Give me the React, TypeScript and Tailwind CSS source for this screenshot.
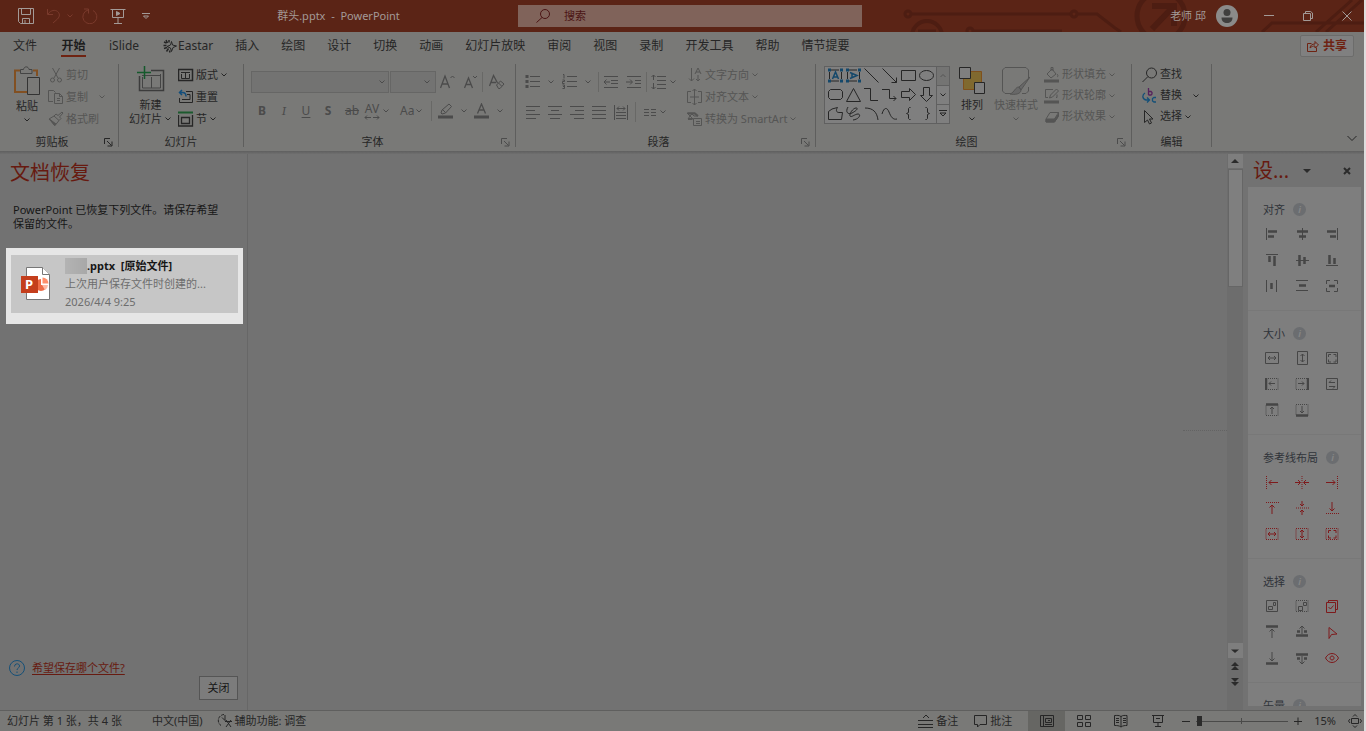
import type { ReactNode } from 'react';

interface IcoProps {
  children: ReactNode;
  size?: number;
  w?: number;
  className?: string;
  sw?: number;
}

// Line icon on a pixel grid, viewBox follows the drawn size
function Ico({ children, size = 16, w, className = '', sw = 1 }: IcoProps) {
  const width = w ?? size;
  return (
    <svg
      width={width}
      height={size}
      viewBox={`0 0 ${width} ${size}`}
      fill="none"
      stroke="currentColor"
      strokeWidth={sw}
      className={`shrink-0 ${className}`}
      aria-hidden="true"
    >
      {children}
    </svg>
  );
}

function Chevron({ className = '' }: { className?: string }) {
  return (
    <Ico size={8} className={className}>
      <path d="M1.5 2.5 4 5l2.5-2.5" />
    </Ico>
  );
}

function Sep() {
  return <span className="h-5 w-px shrink-0 bg-[#686866]" />;
}

// ---------- Title bar ----------

function TitleBar() {
  return (
    <header className="relative flex h-8 shrink-0 items-center bg-[#5b2416] text-[11px] text-[#a39a97]">
      <svg
        className="absolute top-0 right-0 h-8 w-[464px]"
        viewBox="0 0 464 32"
        fill="none"
        stroke="#4d1d12"
        strokeWidth="3"
        aria-hidden="true"
      >
        <circle cx="8" cy="14" r="3" />
        <path d="M12 14h158" />
        <circle cx="174" cy="14" r="3" />
        <path d="M178 14h19l18 14 6 4" />
        <circle cx="27" cy="36" r="15" strokeWidth="4" />
        <path d="M18 31h18" />
        <circle cx="70" cy="31" r="3" />
        <path d="M74 31h88" />
        <circle cx="261" cy="16" r="24" strokeWidth="5" />
        <path d="M252 6h22v20M252 29l21-22" strokeWidth="6" />
        <path d="M362 32l10-9h92M416 32 452 0M426 32 462 0" />
      </svg>
      <div className="relative flex w-[246px] shrink-0 items-center pl-[18px]">
        <button aria-label="保存">
          <Ico>
            <path d="M.5.5h15v15h-13l-2-2zM3.5.5v6h9v-6M4.5 15.5v-5h7v5M7 12v3" />
          </Ico>
        </button>
        <button aria-label="撤消" className="ml-3 flex items-center text-[#7a3a2c]">
          <Ico>
            <path d="M1.5 1v5.5h5.5M2 6c3-4 7-4.500 9.500-2.500s2.500 5 0 7.500L7 15" />
          </Ico>
          <Chevron className="ml-1" />
        </button>
        <button aria-label="重复" className="ml-2 text-[#7a3a2c]">
          <Ico>
            <path d="M2 1h4.500v4.500M6 2a7 7 0 1 0 5 .5" />
          </Ico>
        </button>
        <button aria-label="从头开始" className="ml-3">
          <Ico>
            <path d="M.5 1.500h15M2.500 2v7.500h11V2M8 10v5M4 15.500h8" />
            <path d="M6.500 3.500v4l3.500-2z" fill="currentColor" />
          </Ico>
        </button>
        <button aria-label="自定义快速访问工具栏" className="ml-4">
          <Ico size={8}>
            <path d="M0 1.500h8M1.500 4h5L4 6.500z" />
          </Ico>
        </button>
      </div>
      <h1 className="relative w-[185px] shrink-0 text-center whitespace-pre">群头.pptx  -  PowerPoint</h1>
      <label className="relative ml-[87px] flex h-[22px] w-[344px] shrink-0 items-center bg-[#80635a] pl-[18px] text-[#4b1414]">
        <Ico size={14}>
          <circle cx="9" cy="5" r="4.500" />
          <path d="M6 8.500.5 13.500" />
        </Ico>
        <input
          type="text"
          aria-label="搜索"
          placeholder="搜索"
          className="w-40 bg-transparent pl-3.5 outline-none placeholder:text-[#4b1414]"
        />
      </label>
      <div className="relative ml-auto flex items-center pr-3">
        <button className="flex items-center gap-2.5">
          <span>老师 邱</span>
          <svg width="22" height="22" viewBox="0 0 22 22" aria-hidden="true">
            <circle cx="11" cy="11" r="11" fill="#8b8b8a" />
            <circle cx="11" cy="7.500" r="3.500" fill="#403f3e" />
            <path d="M5.500 12.500h11c0 4-2.500 5.500-5.500 5.500s-5.500-1.500-5.500-5.500z" fill="#403f3e" />
          </svg>
        </button>
        <button aria-label="最小化" className="ml-[26px]">
          <Ico size={10}>
            <path d="M0 4.500h10" />
          </Ico>
        </button>
        <button aria-label="还原" className="ml-[29px]">
          <Ico size={10}>
            <path d="M.5 2.500h7v7h-7zM2.500 2V.5h5l2 1.500v5.500H8" />
          </Ico>
        </button>
        <button aria-label="关闭窗口" className="ml-[29px]">
          <Ico size={10}>
            <path d="m.5.5 9 9m0-9-9 9" />
          </Ico>
        </button>
      </div>
    </header>
  );
}

// ---------- Tabs ----------

const TABS = ['插入', '绘图', '设计', '切换', '动画', '幻灯片放映', '审阅', '视图', '录制', '开发工具', '帮助', '情节提要'];

function TabStrip() {
  return (
    <nav className="flex h-7 shrink-0 items-center text-xs whitespace-nowrap text-[#262626]">
      <button className="h-7 pr-3 pl-[13px]">文件</button>
      <button className="flex h-7 flex-col items-center px-3 font-bold text-[#1d1d1d]">
        <span className="leading-7">开始</span>
        <span className="-mt-[5px] h-0.5 w-[25px] shrink-0 bg-[#6f2312]" />
      </button>
      <button className="h-7 pr-3 pl-[11px]">iSlide</button>
      <button className="flex h-7 items-center gap-px pr-[11px] pl-3">
        <Ico size={14}>
          <path d="M8.5 2.500 9.500 6l4 1-3.500 1.500L8.500 12.500 7.500 9 4 7.500 7.500 6z" />
          <path d="M1 3l2.500 1M3 1l1.500 3M6 1v2.500M.5 6.500h3M1 9.500l3-1M3.500 12.500l2-3M7 13.500l-.5-2" strokeWidth="1.500" />
        </Ico>
        <span>Eastar</span>
      </button>
      {TABS.map((tab) => (
        <button key={tab} className="h-7 px-[11px]">
          {tab}
        </button>
      ))}
      <button className="mr-2.5 ml-auto flex h-[22px] items-center gap-1 rounded-xs border border-[#6c6c6b] bg-[#808080] px-1.5 font-bold text-[#6f2312]">
        <Ico size={12}>
          <path d="M4.500 3.500h-4v8h9v-4M3 8c.5-3 2-4 5-4V1.500L11.500 5 8 8V6c-2 0-3.500.5-5 2z" />
        </Ico>
        共享
      </button>
    </nav>
  );
}

// ---------- Ribbon ----------

interface GroupProps {
  label: string;
  children: ReactNode;
  className: string;
  launcher?: string;
}

function Group({ label, children, className, launcher }: GroupProps) {
  return (
    <section className={`my-1 flex shrink-0 flex-col border-r border-[#5e5e5d] ${className}`} aria-label={label}>
      <div className="flex h-[66px] shrink-0">{children}</div>
      <div className="flex flex-1 items-end">
        <span className="flex-1 text-center leading-none">{label}</span>
        {launcher && (
          <button className={`w-3.5 ${launcher}`} aria-label={`${label}设置`}>
            <Ico size={9}>
              <path d="M.5 6V.5H6M3 3l4.500 4.500M8 3.500V8H3.500" />
            </Ico>
          </button>
        )}
      </div>
    </section>
  );
}

interface RowProps {
  icon: ReactNode;
  label: string;
  arrow?: boolean;
  gap?: string;
  dim?: boolean;
  height?: string;
}

function Row({ icon, label, arrow, gap = 'ml-0.5', dim, height = 'h-[22px]' }: RowProps) {
  return (
    <button className={`flex shrink-0 items-center whitespace-nowrap ${height} ${dim ? 'text-[#555554]' : ''}`}>
      {icon}
      <span className="ml-0.5">{label}</span>
      {arrow && <Chevron className={gap} />}
    </button>
  );
}

function ClipboardGroup() {
  return (
    <Group label="剪贴板" className="w-[119px]" launcher="text-[#262626]">
      <button className="flex w-[46px] flex-col items-center justify-start pt-0.5 pl-2">
        <Ico size={30} w={28}>
          <path d="M7 4.500H2v21.500h12M20 4.500h4V10" stroke="#825022" strokeWidth="2" />
          <path d="M7.500 7.500v-4h3C11 0 15.500 0 16 3.500h3v4z" stroke="#444" />
          <path d="M14.500 11.500h12v17h-12z" stroke="#333" />
        </Ico>
        <span className="mt-1 leading-3">粘贴</span>
        <Chevron className="mt-1" />
      </button>
      <div className="ml-0.5 flex flex-col">
        <Row
          dim
          label="剪切"
          icon={
            <Ico>
              <path d="M4.500 1 10 11M11.500 1 6 11" />
              <circle cx="4.500" cy="13" r="2" />
              <circle cx="11.500" cy="13" r="2" />
            </Ico>
          }
        />
        <Row
          dim
          arrow
          gap="ml-2.5"
          label="复制"
          icon={
            <Ico>
              <path d="M5 12.500H.5v-11h5l2 2M6.500 4.500h5l3 3v7h-8zM11.500 4.500v3h3M9 9.500h3M9 11.500h3" />
            </Ico>
          }
        />
        <Row
          dim
          label="格式刷"
          icon={
            <Ico>
              <path d="m14 1 1 1-3.500 4 1.500 1.500-2 2L6 5l2-2 2 1.500zM6 5 1 8l6 6.500L11 9.500" />
              <path d="m2 8.500 6 4.500-1.500 1.500z" fill="currentColor" />
            </Ico>
          }
        />
      </div>
    </Group>
  );
}

function SlidesGroup() {
  return (
    <Group label="幻灯片" className="w-[125px]">
      <button className="flex w-[51px] flex-col items-center justify-start pt-0.5 pl-3">
        <Ico size={26} w={28}>
          <path d="M2.500 10v14.500h24v-20H14" stroke="#3c3c3c" strokeWidth="1.500" />
          <path d="M5 9.500h19M14.500 11v11M5.500 11v11h18V8" stroke="#444" />
          <path d="M7.500 0v13M0 6.500h14" stroke="#155a2c" strokeWidth="1.500" />
        </Ico>
        <span className="mt-1.5 leading-[14px]">新建</span>
        <span className="flex items-center leading-[14px] whitespace-nowrap">
          幻灯片
          <Chevron className="ml-0.5" />
        </span>
      </button>
      <div className="ml-2 flex flex-col">
        <Row
          arrow
          label="版式"
          icon={
            <Ico>
              <path d="M.5 2.500h14v11H.5z" strokeWidth="1.500" />
              <path d="M3 5.500h9M3.500 7v4.500h8V7M7.500 6v5" />
            </Ico>
          }
        />
        <Row
          label="重置"
          icon={
            <Ico>
              <path d="M8 2.500h6.500v11H1.500V9M9 5.500h3v5H4" />
              <path d="M4 1 1.500 3.500 4 6M2 3.500h2.500c2.500 0 3.500 1.500 3.500 4" stroke="#124e7c" strokeWidth="1.500" />
            </Ico>
          }
        />
        <Row
          arrow
          label="节"
          icon={
            <Ico>
              <path d="M0 1.500h15" stroke="#1c5a2e" strokeWidth="2" />
              <path d="M.5 4v11h14V4M3.500 6.500h8v6h-8z" strokeWidth="1.300" />
            </Ico>
          }
        />
      </div>
    </Group>
  );
}

function FontGroup() {
  return (
    <Group label="字体" className="w-[272px]" launcher="text-[#4c4c4c]">
      <div className="flex w-full flex-col pt-[7px] pl-[7px] text-[#4b4b4b]">
        <div className="flex items-center">
          <span className="flex h-[22px] w-[138px] items-center border border-[#666665] bg-[#737372] pr-0.5">
            <select aria-label="字体" disabled className="h-5 flex-1 appearance-none">
              <option />
            </select>
            <Chevron />
          </span>
          <span className="ml-px flex h-[22px] w-[46px] items-center border border-[#666665] bg-[#737372] pr-0.5">
            <select aria-label="字号" disabled className="h-5 w-8 appearance-none">
              <option />
            </select>
            <Chevron />
          </span>
          <button aria-label="增大字号" className="ml-1">
            <Ico>
              <path d="m.5 14 4.500-12 4.500 12M2 10h6" strokeWidth="1.300" />
              <path d="m10.500 4 2-2 2 2" />
            </Ico>
          </button>
          <button aria-label="减小字号" className="ml-2">
            <Ico>
              <path d="m.5 14 4-10 4 10M2 10.500h5" strokeWidth="1.300" />
              <path d="m9 2 2 2 2-2" />
            </Ico>
          </button>
          <span className="ml-0.5 flex items-center">
            <Sep />
          </span>
          <button aria-label="清除格式" className="ml-1.5">
            <Ico>
              <path d="m.5 12 4-10.500L8.500 9M2 8.500h5" strokeWidth="1.300" />
              <path d="m7.500 11 4-4 3.500 3-4 4.500H9.500zM9.500 9l3 3" />
            </Ico>
          </button>
        </div>
        <div className="mt-1.5 flex h-6 items-center text-xs">
          <button className="w-[22px] font-bold">B</button>
          <button className="w-[22px] font-serif text-[13px] italic">I</button>
          <button className="w-[22px] underline underline-offset-2">U</button>
          <button className="w-[22px] font-bold">S</button>
          <button className="ml-0.5 w-[22px] line-through">ab</button>
          <button className="flex items-center" aria-label="字符间距">
            <span className="flex w-[18px] flex-col items-center leading-3">
              AV
              <Ico size={5} w={16}>
                <path d="M3 .5 1 2.500l2 2M1 2.500h6M9 2.500h6M13 .5l2 2-2 2" />
              </Ico>
            </span>
            <Chevron className="ml-px" />
          </button>
          <button className="ml-2.5 flex items-center">
            Aa
            <Chevron className="ml-px" />
          </button>
          <span className="ml-2 flex">
            <Sep />
          </span>
          <button aria-label="突出显示" className="ml-1.5 flex items-center gap-1">
            <Ico>
              <path d="M0 14h15" strokeWidth="3" />
              <path d="m3 10 1-3 7-6 2.500 2.500-6 6.500-3.500 1zM4.500 6.500l3 3" />
            </Ico>
            <Chevron className="ml-0.5" />
          </button>
          <button aria-label="字体颜色" className="ml-1.5 flex items-center gap-1">
            <Ico>
              <path d="M0 14h15" strokeWidth="3" />
              <path d="m3.500 10.500 4-9.500 4 9.500M5 7h5" strokeWidth="1.300" />
            </Ico>
            <Chevron className="ml-0.5" />
          </button>
        </div>
      </div>
    </Group>
  );
}

const ALIGN = [
  { name: '左对齐', d: 'M1 2.500h14M1 6.500h9M1 10.500h14M1 14.500h10' },
  { name: '居中', d: 'M1 2.500h14M4 6.500h8M1 10.500h14M3 14.500h10' },
  { name: '右对齐', d: 'M1 2.500h14M6 6.500h9M1 10.500h14M5 14.500h10' },
  { name: '两端对齐', d: 'M1 2.500h14M1 6.500h14M1 10.500h14M1 14.500h14' },
  { name: '分散对齐', d: 'M1.500 1v15M14.500 1v15M4 4.500h8M6 2.500l-2 2 2 2M10 2.500l2 2-2 2M3 8.500h10M3 11.500h10M3 14.500h10' },
];

function ParagraphGroup() {
  return (
    <Group label="段落" className="w-[300px]" launcher="text-[#4c4c4c]">
      <div className="flex w-[171px] shrink-0 flex-col pt-1.5 pl-[9px] text-[#4b4b4b]">
        <div className="flex h-6 items-center">
          <button aria-label="项目符号" className="flex items-center gap-1.5">
            <Ico>
              <path d="M5 2.500h10M5 7.500h10M5 12.500h10" />
              <path d="M.5 2.500h3M.5 7.500h3M.5 12.500h3" strokeWidth="3" />
            </Ico>
            <Chevron />
          </button>
          <button aria-label="编号" className="ml-[7px] flex items-center gap-1.5">
            <Ico>
              <path d="M5 2.500h10M5 7.500h10M5 12.500h10M1 .5h1v4M.5 6h2v1.500h-2v2h2M.5 11h2v3.500h-2M1 12.500h1" />
            </Ico>
            <Chevron />
          </button>
          <span className="ml-1.5 flex">
            <Sep />
          </span>
          <button aria-label="减少缩进" className="ml-1">
            <Ico>
              <path d="M1 2.500h14M8 6.500h7M8 9.500h7M1 13.500h14M7 8H1M3.500 5.500 1 8l2.500 2.500" />
            </Ico>
          </button>
          <button aria-label="增加缩进" className="ml-[7px]">
            <Ico>
              <path d="M1 2.500h14M9 6.500h6M9 9.500h6M1 13.500h14M0 8h6M4 5.500 6.500 8 4 10.500" />
            </Ico>
          </button>
          <span className="ml-1 flex">
            <Sep />
          </span>
          <button aria-label="行距" className="ml-1 flex items-center gap-0.5">
            <Ico>
              <path d="M6 2.500h9M6 6.500h9M6 10.500h9M6 14.500h9M2.500 1v5M.5 3l2-2 2 2M2.500 9v6M.5 13l2 2 2-2" />
            </Ico>
            <Chevron />
          </button>
        </div>
        <div className="mt-1.5 flex h-6 items-center gap-1.5">
          {ALIGN.map((a) => (
            <button key={a.name} aria-label={a.name}>
              <Ico>
                <path d={a.d} />
              </Ico>
            </button>
          ))}
          <Sep />
          <button aria-label="分栏" className="ml-0.5 flex items-center">
            <Ico size={14}>
              <path d="M0 4.500h5M7 4.500h5M0 7.500h5M7 7.500h5M0 10.500h5M7 10.500h5" />
            </Ico>
            <Chevron className="ml-px" />
          </button>
        </div>
      </div>
      <div className="flex flex-col">
        <Row
          dim
          arrow
          label="文字方向"
          icon={
            <Ico>
              <path d="M4.500 1v13M2 11.500 4.500 14 7 11.500M8 7l3-6 3 6M9 5h4M11 8v6M9 12l2 2 2-2" />
            </Ico>
          }
        />
        <Row
          dim
          arrow
          label="对齐文本"
          icon={
            <Ico>
              <path d="M4 2.500H.5v11H4M11 2.500h3.500v11H11M7.500 0v16M5.500 2l2-2 2 2M5.500 14l2 2 2-2M3 8h9" />
            </Ico>
          }
        />
        <Row
          dim
          arrow
          label="转换为 SmartArt"
          icon={
            <Ico>
              <path d="M0 2h8l3 3H7L5 3 3 5l3 3H1l2-3zM6.500 7.500h8v7h-8zM9 10.500h4M9 12.500h4" />
              <path d="M1 2.500h7l3 2.500M1 8h4" strokeWidth="2" />
            </Ico>
          }
        />
      </div>
    </Group>
  );
}

const textBox = 'M4 3h8M4 14h8M2.500 5v7M14.500 5v7';
const corners = 'M1 1.500h3v3H1zM13 1.500h3v3h-3zM1 12.500h3v3H1zM13 12.500h3v3h-3z';

const SHAPES: { name: string; d: string; blue?: string }[] = [
  { name: '文本框', d: textBox, blue: 'M5.500 12l3-7 3 7M6.500 10h4' },
  { name: '竖排文本框', d: textBox, blue: 'M5 5.500l7 3-7 3M7 6.500v4' },
  { name: '直线', d: 'M1.500 1.500l14 14' },
  { name: '箭头', d: 'M1.500 1.500l14 14M15.500 10.500v5h-5' },
  { name: '矩形', d: 'M1.500 3.500h14v10h-14z' },
  { name: '椭圆', d: 'M1.500 8.500a7 5 0 1 0 14 0 7 5 0 1 0-14 0' },
  { name: '圆角矩形', d: 'M3.500 3.500h10l2 2v6l-2 2h-10l-2-2v-6z' },
  { name: '三角形', d: 'M8.500 2.500l7 13h-14z' },
  { name: '肘形连接符', d: 'M1 2.500h6.500v12H15' },
  { name: '肘形箭头', d: 'M1 3.500h7.500v9H15M12.500 10l2.500 2.500-2.500 2.500' },
  { name: '右箭头', d: 'M1.500 5.500h8v-3l6 6-6 6v-3h-8z' },
  { name: '下箭头', d: 'M5.500 1.500v8h-3l6 6 6-6h-3v-8z' },
  { name: '任意多边形', d: 'M5 4l5.500-1.500c-2 3-1 5 1.500 5h3.500l-1 7h-13v-8z' },
  { name: '自由曲线', d: 'M3 2c-3 5 0 8 4 6s7-5 4-5-7 6-6 8 5-2 8-2 2 5-5 6' },
  { name: '弧形', d: 'M2 3c8 0 12 4 13 12' },
  { name: '曲线', d: 'M1 9c2-7 5-7 7-2s4 8 8 7' },
  { name: '左大括号', d: 'M10.500 2.500h-1l-1 1v4l-2 1 2 1v4l1 1h1' },
  { name: '右大括号', d: 'M7.500 2.500h1l1 1v4l2 1-2 1v4l-1 1h-1' },
];

function DrawingGroup() {
  return (
    <Group label="绘图" className="w-[316px]" launcher="text-[#4c4c4c]">
      <div className="mt-0.5 ml-2 flex h-[58px] w-[126px] shrink-0 border border-[#606060] bg-[#7f7f7f]">
        <div className="grid w-[111px] shrink-0 grid-cols-6 pl-0.5">
          {SHAPES.map((s) => (
            <button key={s.name} aria-label={s.name}>
              <Ico size={18}>
                <path d={s.d} stroke="#262626" />
                {s.blue && (
                  <>
                    <path d={corners} fill="#14486b" stroke="none" />
                    <path d={s.blue} stroke="#14486b" strokeWidth="1.500" />
                  </>
                )}
              </Ico>
            </button>
          ))}
        </div>
        <div className="flex flex-1 flex-col border-l border-[#606060]">
          <button aria-label="向上滚动" className="flex flex-1 items-center justify-center bg-[#747473] text-[#555]">
            <Ico size={8}>
              <path d="M1.500 5 4 2.500 6.500 5" />
            </Ico>
          </button>
          <button aria-label="向下滚动" className="flex flex-1 items-center justify-center border-y border-[#606060]">
            <Chevron />
          </button>
          <button aria-label="其他形状" className="flex flex-1 items-center justify-center">
            <Ico size={8}>
              <path d="M0 .5h8M1 3l3 3 3-3z" />
            </Ico>
          </button>
        </div>
      </div>
      <button className="flex w-11 shrink-0 flex-col items-center justify-start pt-[3px]">
        <Ico size={28} w={26}>
          <path d="M4.500 4.500h18v18h-18z" fill="#80692f" stroke="#80501c" />
          <path d="M.5.5h11v11H.5zM15.500 15.500h10v11h-10z" fill="#7f7f7f" stroke="#262626" />
        </Ico>
        <span className="mt-1 leading-3">排列</span>
        <Chevron className="mt-1" />
      </button>
      <button className="flex w-11 shrink-0 flex-col items-center justify-start pt-[3px] text-[#555554]">
        <Ico size={28}>
          <path d="M13 26.500H3l-2.500-2.500V3L3 .5h21L26.500 3v8M26.500 20v4L24 26.500h-4" />
          <path d="m28 10-11 10 2 3zM17 20c-4 0-4 5-9 7 5 1 11 0 11-4z" fill="#686868" />
        </Ico>
        <span className="mt-1 leading-3 whitespace-nowrap">快速样式</span>
        <Chevron className="mt-1" />
      </button>
      <div className="ml-1.5 flex flex-col">
        <Row
          dim
          arrow
          height="h-[21px]"
          label="形状填充"
          icon={
            <Ico>
              <path d="M0 14h15" strokeWidth="3" />
              <path d="m3 7 5-5 4 5-5 4zM7 4V.5h2V4M13 7c2 2 0 3 0 3" />
            </Ico>
          }
        />
        <Row
          dim
          arrow
          height="h-[21px]"
          label="形状轮廓"
          icon={
            <Ico>
              <path d="M0 14h15" strokeWidth="3" />
              <path d="M9 1.500H1.500v8H4M5.500 10l1-3 6-6 2 2-6 6zM12 9.500h1v-3" />
            </Ico>
          }
        />
        <Row
          dim
          arrow
          height="h-[21px]"
          label="形状效果"
          icon={
            <Ico>
              <path d="M6 3.500h8.500L10.500 10H2zM2 10v3h8.500l4-6V3.500" />
              <path d="M2 10.500h8.500L14 6v2l-3.500 5H2z" fill="currentColor" />
            </Ico>
          }
        />
      </div>
    </Group>
  );
}

function EditGroup() {
  return (
    <Group label="编辑" className="w-[80px]">
      <div className="flex flex-col pl-2.5">
        <Row
          height="h-[21px]"
          label="查找"
          icon={
            <Ico>
              <circle cx="9.500" cy="6" r="5" />
              <path d="M6 9.500.5 15" />
            </Ico>
          }
        />
        <Row
          arrow
          gap="ml-2.5"
          height="h-[21px]"
          label="替换"
          icon={
            <Ico>
              <path d="M6.500 0v7M6.500 3.500h2.500l1 1v1.500l-1 1H6.500" stroke="#56215c" strokeWidth="1.300" />
              <path d="M14 9.500h-2l-1.500 1v2.500l1.500 1h2" stroke="#145078" strokeWidth="1.300" />
              <path d="M3 5C0 7 0 11 4 12h3M5 9.500 7.500 12 5 14.500" stroke="#145078" strokeWidth="1.300" />
            </Ico>
          }
        />
        <Row
          arrow
          height="h-[21px]"
          label="选择"
          icon={
            <Ico>
              <path d="M2.500 1.500v12L5.500 11l2 4 2-1-2-4h3.500z" />
            </Ico>
          }
        />
      </div>
    </Group>
  );
}

function Ribbon() {
  return (
    <div className="flex h-[91px] shrink-0 text-[11px] text-[#262626]">
      <ClipboardGroup />
      <SlidesGroup />
      <FontGroup />
      <ParagraphGroup />
      <DrawingGroup />
      <EditGroup />
      <button aria-label="折叠功能区" className="mt-auto mr-[7px] mb-2 ml-auto">
        <Ico size={10}>
          <path d="m.5 3 4.500 4.500L9.500 3" />
        </Ico>
      </button>
    </div>
  );
}

// ---------- Document recovery pane ----------

function RecoveryPane() {
  return (
    <aside className="flex w-[248px] shrink-0 flex-col border-r border-[#676767] text-[11px] text-[#161616]">
      <h2 className="pt-[5px] pl-2.5 text-xl leading-7 text-[#671a10]">文档恢复</h2>
      <p className="mt-4 pr-5 pl-[13px] leading-[14px]">PowerPoint 已恢复下列文件。请保存希望保留的文件。</p>
      <div className="mt-[17px] mr-1 ml-1.5 bg-[#e6e6e6] px-[5px] pt-[7px] pb-[11px]">
        <button className="flex h-[58px] w-full items-center bg-[#c6c6c6] pl-2.5 text-left">
          <svg width="30" height="34" viewBox="0 0 30 34" className="shrink-0" aria-hidden="true">
            <path d="M5.500.5h16l7 7v25h-23z" fill="#fff" stroke="#777" />
            <path d="M21.500.5v7h7" fill="#fff" stroke="#777" />
            <path d="M20 12a6 6 0 1 0 6 6h-6z" fill="#ed6c47" />
            <path d="M21.500 10.500v6h6a6 6 0 0 0-6-6z" fill="#ff8f6b" />
            <path d="M21 18h6a6 6 0 0 1-3 5z" fill="#ffb9a3" />
            <rect y="9" width="17" height="17" fill="#c43e1c" />
            <text x="4" y="22" fontSize="13" fontWeight="700" fill="#fff">
              P
            </text>
          </svg>
          <span className="ml-3.5 flex flex-col leading-[18px]">
            <span className="flex items-center font-bold whitespace-pre">
              <span className="h-4 w-[22px] bg-linear-to-r from-[#b3b3b3] to-[#a8a8a8]" />
              .pptx  [原始文件]
            </span>
            <span className="text-[#6d6d6d]">上次用户保存文件时创建的...</span>
            <span className="text-[#6d6d6d]">2026/4/4 9:25</span>
          </span>
        </button>
      </div>
      <div className="mt-auto flex items-center pl-[9px]">
        <Ico className="text-[#155078]">
          <circle cx="8" cy="8" r="7.500" />
          <path d="M5.500 6.500C5.500 3 10.500 3 10.500 6c0 2-2.500 2-2.500 4M8 11.500V13" />
        </Ico>
        <a href="#help" className="ml-[7px] text-[#671a10] underline underline-offset-2">
          希望保存哪个文件?
        </a>
      </div>
      <button className="mr-[9px] mb-2.5 h-6 w-[39px] self-end border border-[#555] bg-[#7c7c7c]">关闭</button>
    </aside>
  );
}

// ---------- Vertical scroll bar ----------

function ScrollBar() {
  return (
    <div className="flex w-4 shrink-0 flex-col items-center bg-[#6d6d6d] text-[#2b2b2b]">
      <button aria-label="向上" className="flex h-3.5 w-[15px] items-center justify-center bg-[#7e7e7e]">
        <Ico size={8}>
          <path d="M0 6l4-4 4 4z" fill="currentColor" stroke="none" />
        </Ico>
      </button>
      <div className="mt-px h-[118px] w-[15px] border border-[#666] bg-[#7f7f7f]" />
      <button aria-label="向下" className="mt-auto flex h-[15px] w-[15px] items-center justify-center bg-[#7e7e7e]">
        <Ico size={8}>
          <path d="M0 2.500l4 3.500 4-3.500z" fill="currentColor" stroke="none" />
        </Ico>
      </button>
      <button aria-label="上一张幻灯片" className="mt-1">
        <Ico size={8}>
          <path d="M0 4l4-4 4 4zM0 8l4-4 4 4z" fill="currentColor" stroke="none" />
        </Ico>
      </button>
      <button aria-label="下一张幻灯片" className="mt-2 mb-6">
        <Ico size={8}>
          <path d="M0 0l4 4 4-4zM0 4l4 4 4-4z" fill="currentColor" stroke="none" />
        </Ico>
      </button>
    </div>
  );
}

// ---------- Design tools pane ----------

interface Tool {
  name: string;
  d: string;
  bold?: string;
  dash?: string;
  red?: boolean;
}

const box = 'M.5 1.500h13v11H.5z';
const square = 'M2.500.5h10v13h-10z';
const dots = 'M1 1.500h12v11H1z';

const SECTIONS: { title: string; tools: Tool[] }[] = [
  {
    title: '对齐',
    tools: [
      { name: '左对齐', d: 'M1.500 1v12', bold: 'M3 4.500h9M3 9.500h6' },
      { name: '水平居中', d: 'M7.500 1v12', bold: 'M2 4.500h11M4 9.500h7' },
      { name: '右对齐', d: 'M12.500 1v12', bold: 'M2 4.500h9M5 9.500h6' },
      { name: '顶端对齐', d: 'M1 1.500h12', bold: 'M4.500 3v6M9.500 3v10' },
      { name: '垂直居中', d: 'M1 7.500h13', bold: 'M4.500 2v11M9.500 4v7' },
      { name: '底端对齐', d: 'M1 12.500h12', bold: 'M4.500 2v9M9.500 5v6' },
      { name: '横向分布', d: 'M1.500 1v12M11.500 1v12', bold: 'M6.500 4v6' },
      { name: '纵向分布', d: 'M1 1.500h12M1 11.500h12', bold: 'M4 6.500h7' },
      { name: '居中', d: 'M1.500 5V1.500H5M9 1.500h3.500V5M12.500 9v3.500H9M5 12.500H1.500V9', bold: 'M4 7h6' },
    ],
  },
  {
    title: '大小',
    tools: [
      { name: '等宽', d: `${box}M3 7h8M5 5 3 7l2 2M9 5l2 2-2 2` },
      { name: '等高', d: `${square}M7.500 3v8M5.500 5l2-2 2 2M5.500 9l2 2 2-2` },
      { name: '等大', d: 'M1.500 1.500h11v11h-11zM3.500 6V3.500H6M8.500 3.500H11V6M11 8.500V11H8.500M6 11H3.500V8.500' },
      { name: '左拉伸', d: 'M4 6.500h6M6 4.500l-2 2 2 2', dash: dots, bold: 'M1 1v12' },
      { name: '右拉伸', d: 'M3 6.500h6M7 4.500l2 2-2 2', dash: dots, bold: 'M13 1v12' },
      { name: '交换大小', d: 'M1.500 1.500h11v11h-11zM4 5.500h6M6 3.500l-2 2M4 9.500h6M8 11.500l2-2' },
      { name: '上拉伸', d: 'M7 4v7M5 6l2-2 2 2', dash: dots, bold: 'M1 1.500h12' },
      { name: '下拉伸', d: 'M7 3v7M5 8l2 2 2-2', dash: dots, bold: 'M1 12.500h12' },
    ],
  },
  {
    title: '参考线布局',
    tools: [
      { name: '左参考线', red: true, d: 'M4 7.500h9M6.500 5 4 7.500 6.500 10', dash: 'M1.500 1v13' },
      { name: '垂直参考线', red: true, d: 'M0 7.500h5M3 5l2.500 2.500L3 10M9 7.500h5M11 5 8.500 7.500 11 10', dash: 'M7 1v13' },
      { name: '右参考线', red: true, d: 'M1 7.500h9M7.500 5l2.500 2.500L7.500 10', dash: 'M12.500 1v13' },
      { name: '上参考线', red: true, d: 'M7 4v9M4.500 6.500 7 4l2.500 2.500', dash: 'M1 1.500h13' },
      { name: '水平参考线', red: true, d: 'M7 0v5M5 3l2 2 2-2M7 14V9M5 11l2-2 2 2', dash: 'M1 7h13' },
      { name: '下参考线', red: true, d: 'M7 1v9M4.500 7.500 7 10l2.500-2.500', dash: 'M1 12.500h13' },
      { name: '参考线等宽', red: true, d: 'M3 7h8M5 5 3 7l2 2M9 5l2 2-2 2', dash: dots },
      { name: '参考线等高', red: true, d: 'M7 3v8M5 5l2-2 2 2M5 9l2 2 2-2', dash: dots },
      { name: '参考线等大', red: true, d: 'M3.500 6V3.500H6M8.500 3.500H11V6M11 8.500V11H8.500M6 11H3.500V8.500', dash: dots },
    ],
  },
  {
    title: '选择',
    tools: [
      { name: '组合', d: 'M1.500 1.500h11v11h-11zM3.500 7.500h4v3h-4zM8.500 3.500h2v3h-2z' },
      { name: '取消组合', d: 'M3.500 7.500h4v4h-4zM8.500 3.500h3v3h-3z', dash: dots },
      { name: '全选', red: true, d: 'M1.500 3.500h9v10h-9zM3.500 3V1.500h9v9H11M3.500 8l2 2 3-3.500' },
      { name: '置于顶层', d: 'M7 4v9M4.500 6.500 7 4l2.500 2.500', bold: 'M1 1.500h12' },
      { name: '上移一层', d: 'M7 1v8M4.500 3.500 7 1l2.500 2.500', bold: 'M2 6.500h3M9 6.500h3M1 10.500h12' },
      { name: '选择', red: true, d: 'M4 2.500v11l2.500-4 5.500-.5z' },
      { name: '置于底层', d: 'M7 1v9M4.500 7.500 7 10l2.500-2.500', bold: 'M1 12.500h12' },
      { name: '下移一层', d: 'M7 5v8M4.500 10.500 7 13l2.500-2.500', bold: 'M1 3.500h12M2 7.500h3M9 7.500h3' },
      { name: '显示', red: true, d: 'M.5 7c3-6 10-6 13 0-3 6-10 6-13 0zM7 5a2 2 0 1 0 .1 0z' },
    ],
  },
  { title: '矢量', tools: [] },
];

function ToolsPane() {
  return (
    <aside className="flex w-[121px] shrink-0 flex-col overflow-hidden pr-[3px] pl-[5px]">
      <div className="flex h-[33px] shrink-0 items-center pr-2.5 pl-[5px]">
        <h2 className="text-xl leading-7 text-[#671a10]">设...</h2>
        <button aria-label="任务窗格选项" className="ml-3.5">
          <Ico size={8}>
            <path d="M0 2h8L4 6z" fill="#2b2b2b" stroke="none" />
          </Ico>
        </button>
        <button aria-label="关闭窗格" className="ml-auto">
          <Ico size={8} sw={2}>
            <path d="m1 1 6 6m0-6L1 7" stroke="#2b2b2b" />
          </Ico>
        </button>
      </div>
      <div className="mb-1 min-h-0 flex-1 overflow-hidden bg-[#7e7e7e]">
        {SECTIONS.map((section) => (
          <section key={section.title} className="h-[124px] border-b border-[#787878]">
            <h3 className="flex h-[34px] items-center gap-2 pt-[11px] pl-[15px] text-[11px] leading-none text-[#30343a]">
              {section.title}
              <span className="flex h-[13px] w-[13px] items-center justify-center rounded-full bg-[#6b6d70] text-[9px] font-bold text-[#858585] italic">
                i
              </span>
            </h3>
            <div className="grid w-[99px] grid-cols-3 pl-[9px]">
              {section.tools.map((tool) => (
                <button
                  key={tool.name}
                  aria-label={tool.name}
                  className={`flex h-[26px] items-center justify-center ${tool.red ? 'text-[#7e1a1c]' : 'text-[#464646]'}`}
                >
                  <Ico size={14}>
                    <path d={tool.d} />
                    {tool.bold && <path d={tool.bold} strokeWidth="2.500" />}
                    {tool.dash && <path d={tool.dash} strokeDasharray="1 1" />}
                  </Ico>
                </button>
              ))}
            </div>
          </section>
        ))}
      </div>
    </aside>
  );
}

// ---------- Status bar ----------

function StatusBar() {
  return (
    <footer className="flex h-[21px] shrink-0 items-center border-t border-[#5f5f5e] bg-[#797977] pl-[7px] text-[11px] whitespace-nowrap text-[#262626]">
      <span>幻灯片 第 1 张，共 4 张</span>
      <button className="ml-[30px]">中文(中国)</button>
      <button className="ml-3.5 flex items-center gap-0.5">
        <Ico>
          <path d="M7 1.500a6 6 0 0 0-3 11" strokeDasharray="3 1" />
          <path d="M5 4.500l3 3V2M9 7l5 7M14 7l-5 7M8 8.500h7" />
        </Ico>
        辅助功能: 调查
      </button>
      <button className="ml-auto flex items-center gap-0.5">
        <Ico>
          <path d="M5 5l3-3 3 3M0 7.500h15M0 11.500h15M0 14.500h15" />
        </Ico>
        备注
      </button>
      <button className="ml-4 flex items-center gap-0.5">
        <Ico size={14}>
          <path d="M.5 1.500h12v9H6L3.500 13v-2.500h-3z" />
        </Ico>
        批注
      </button>
      <div className="ml-4 flex h-5 items-center">
        <button aria-label="普通视图" className="flex h-5 w-[37px] items-center justify-center bg-[#666663]">
          <Ico size={14}>
            <path d="M.5 1.500h13v11H.5zM3.500 2v10M5.500 4.500h6v4h-6zM8 6.500h2M5 10.500h7" />
          </Ico>
        </button>
        <button aria-label="幻灯片浏览" className="flex h-5 w-[37px] items-center justify-center">
          <Ico size={14}>
            <path d="M.5 1.500h5v4h-5zM8.500 1.500h5v4h-5zM.5 8.500h5v4h-5zM8.500 8.500h5v4h-5z" />
          </Ico>
        </button>
        <button aria-label="阅读视图" className="flex h-5 w-[37px] items-center justify-center">
          <Ico size={14}>
            <path d="M7 2.500C5 1 3 1.500.5 1.500v10c2.500 0 4.500 0 6.500 1.500 2-1.500 4-1.500 6-1.500v-10c-2.500 0-4-.5-6 1zM7 2v11M2 4.500h3M2 6.500h3M2 8.500h3M9 4.500h3M9 6.500h3M9 8.500h3" />
          </Ico>
        </button>
        <button aria-label="幻灯片放映" className="flex h-5 w-[37px] items-center justify-center">
          <Ico size={14}>
            <path d="M1 1.500h12M2.500 2v6.500h9V2M7 9v3M4 12.500h6M5 4.500h4" />
          </Ico>
        </button>
      </div>
      <button aria-label="缩小" className="ml-1.5">
        <Ico size={8}>
          <path d="M0 4.500h8" />
        </Ico>
      </button>
      <div className="relative ml-1.5 flex items-center">
        <span className="absolute left-[45px] h-1.5 w-px bg-[#4a4a49]" />
        <input
          type="range"
          aria-label="缩放"
          min={10}
          max={400}
          defaultValue={15}
          className="relative h-px w-[92px] appearance-none bg-[#4a4a49] [&::-webkit-slider-thumb]:h-2.5 [&::-webkit-slider-thumb]:w-[5px] [&::-webkit-slider-thumb]:appearance-none [&::-webkit-slider-thumb]:bg-[#2b2b2b]"
        />
      </div>
      <button aria-label="放大" className="ml-1.5">
        <Ico size={8}>
          <path d="M0 4.500h8M4 .5v8" />
        </Ico>
      </button>
      <button className="ml-3">15%</button>
      <button aria-label="适应窗口" className="mr-0.5 ml-3">
        <Ico size={14}>
          <path d="M3.500 4.500h7v5h-7zM5 2.500 7 .5l2 2M5 11.500l2 2 2-2M2 5 .5 7 2 9M12 5l1.500 2L12 9" />
        </Ico>
      </button>
    </footer>
  );
}

export default function App() {
  return (
    <div className="flex h-screen flex-col overflow-hidden border-r-2 border-[#dedede] bg-[#797977] font-['Noto_Sans','Noto_Sans_CJK_SC',sans-serif]">
      <TitleBar />
      <TabStrip />
      <Ribbon />
      <div className="h-[3px] shrink-0 bg-linear-to-b from-[#5f5f5f] to-[#6f6f6f]" />
      <main className="flex min-h-0 flex-1 bg-[#727272]">
        <RecoveryPane />
        <div className="flex min-w-0 flex-1 flex-col items-end pt-[276px]">
          <div className="w-11 border-t border-dotted border-[#636363]" />
        </div>
        <ScrollBar />
        <ToolsPane />
      </main>
      <StatusBar />
    </div>
  );
}
